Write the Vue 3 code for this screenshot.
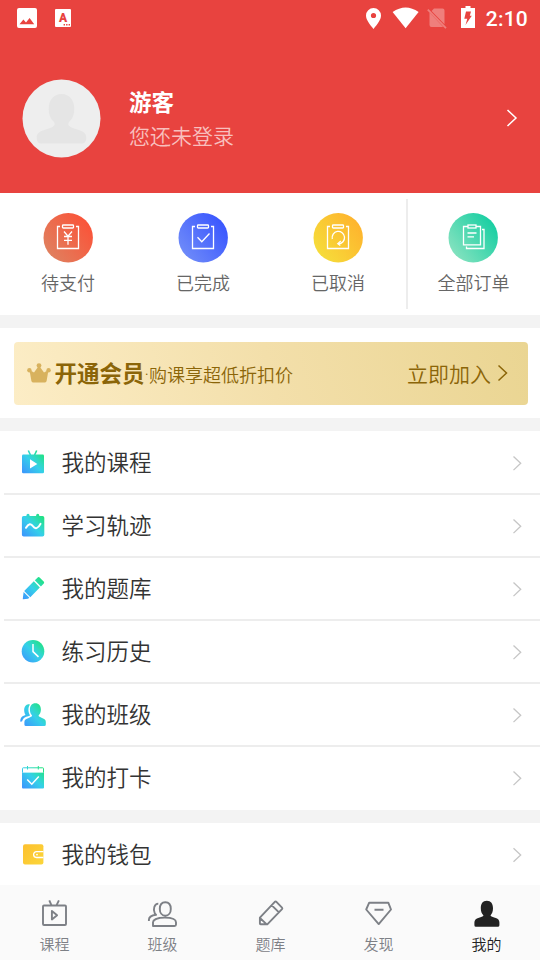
<script setup>
const orders = [
  { id: 'pay', label: '待支付', from: '#dd8563', to: '#fd4f35' },
  { id: 'done', label: '已完成', from: '#7490f8', to: '#3552ff' },
  { id: 'cancel', label: '已取消', from: '#f5e13c', to: '#ffb02c' },
  { id: 'all', label: '全部订单', from: '#90e4c2', to: '#0fcda0' },
]
const rows = [
  { id: 'course', label: '我的课程' },
  { id: 'track', label: '学习轨迹' },
  { id: 'bank', label: '我的题库' },
  { id: 'history', label: '练习历史' },
  { id: 'class', label: '我的班级' },
  { id: 'checkin', label: '我的打卡' },
]
const tabs = [
  { id: 'course', label: '课程' },
  { id: 'class', label: '班级' },
  { id: 'bank', label: '题库' },
  { id: 'find', label: '发现' },
  { id: 'me', label: '我的' },
]
</script>

<template>
  <div class="screen">
    <svg class="defs" width="0" height="0">
      <defs>
        <linearGradient id="aqua" gradientUnits="userSpaceOnUse" x1="3" y1="23" x2="23" y2="3">
          <stop offset="0" stop-color="#3c96fc" />
          <stop offset=".5" stop-color="#35cfea" />
          <stop offset=".68" stop-color="#2fd9c4" />
          <stop offset="1" stop-color="#1ee27c" />
        </linearGradient>
        <linearGradient id="gold" x1="0" y1="0" x2="1" y2="1">
          <stop offset="0" stop-color="#fdc02f" />
          <stop offset="1" stop-color="#fbd63a" />
        </linearGradient>
      </defs>
    </svg>

    <header class="header">
      <div class="status">
        <svg class="s-img" width="20" height="20" viewBox="0 0 20 20">
          <path fill="#fff" fill-rule="evenodd" d="M2 0H18Q20 0 20 2V18Q20 20 18 20H2Q0 20 0 18V2Q0 0 2 0ZM2.500 16.200H17.200L12.600 10L9 14.600L6.400 11.600Z" />
        </svg>
        <svg class="s-a" width="16" height="18" viewBox="0 0 16 18">
          <rect width="16" height="18" rx="1" fill="#fff" />
          <text x="8" y="13" text-anchor="middle" class="s-letter">A</text>
          <path d="M8.600 15.800H10M11.100 15.800H12.500M13.600 15.800H15" stroke="#e8433f" stroke-width="1.400" />
        </svg>
        <span class="grow"></span>
        <svg class="s-pin" width="16" height="21" viewBox="0 0 16 21">
          <path fill="#fff" fill-rule="evenodd" d="M7.500 0A7.500 7.500 0 0 1 15 7.500C15 12 11 16.500 7.500 21C4 16.500 0 12 0 7.500A7.500 7.500 0 0 1 7.500 0ZM7.500 4.900A2.600 2.600 0 1 0 7.500 10.100A2.600 2.600 0 1 0 7.500 4.900Z" />
        </svg>
        <svg class="s-wifi" width="26" height="21" viewBox="0 0 26 21">
          <path fill="#fff" d="M12.600 20.300L-.4 4.100Q12.600-4.900 25.600 4.100Z" />
        </svg>
        <svg class="s-sim" width="20" height="22" viewBox="0 0 20 22">
          <path fill="#ef7f7c" d="M7 1.500H15.500Q17.500 1.500 17.500 3.500V17.200L4.600 4ZM2.500 5.600L16 19.800Q15.700 20 15 20H4.500Q2.500 20 2.500 18Z" />
          <path d="M.8 2.600L19 21.200" stroke="#ef7f7c" stroke-width="1.800" />
        </svg>
        <svg class="s-bat" width="14" height="22" viewBox="0 0 14 22">
          <path fill="#fff" d="M4.500 0H9.500V2H14V22H0V2H4.500Z" />
          <path fill="#e8433f" d="M5 5.600H10L8.800 9.800H10.800L4.500 19L6.300 12.800H3.300Z" />
        </svg>
        <span class="clock">2:10</span>
      </div>
      <div class="profile">
        <svg class="avatar" width="79" height="79" viewBox="0 0 79 79">
          <g transform="translate(.5 .5)">
            <circle cx="39" cy="39" r="39" fill="#eee" />
            <path fill="#e5e5e5" d="M39 14.500C47 14.500 51.800 21 51.800 29.500C51.800 35 50 39.500 46.500 42.500C44.500 46 47 47.500 53 49.500C60 51.500 63.800 53 63.800 58.500Q63.800 64 59 64H19Q14.200 64 14.200 58.500C14.200 53 18 51.500 25 49.500C31 47.500 33.500 46 31.500 42.500C28 39.500 26.200 35 26.200 29.500C26.200 21 31 14.500 39 14.500Z" />
          </g>
        </svg>
        <div class="who">
          <div class="name">游客</div>
          <div class="hint">您还未登录</div>
        </div>
        <svg class="go" width="12" height="18" viewBox="0 0 12 18"><path d="M1.500 1L10 9L1.500 17" fill="none" stroke="#fff" stroke-width="1.500" /></svg>
      </div>
    </header>

    <nav class="orders">
      <div v-for="o in orders" :key="o.id" class="order" :class="o.id">
        <svg width="50" height="50" viewBox="0 0 50 50">
          <defs>
            <linearGradient :id="'g-' + o.id" x1="0" y1=".9" x2="1" y2=".15">
              <stop offset="0" :stop-color="o.from" />
              <stop offset="1" :stop-color="o.to" />
            </linearGradient>
          </defs>
          <circle cx="25.200" cy="24.700" r="24.700" :fill="`url(#g-${o.id})`" />
          <g fill="none" stroke="#fff" stroke-width="1.300">
            <template v-if="o.id !== 'all'">
              <path d="M17 13.500H14.500V35.500H35.500V13.500H33" />
              <rect x="19.500" y="12" width="11" height="3" rx=".8" />
            </template>
            <path v-if="o.id === 'pay'" d="M21 18.500L25 23.200L29 18.500M25 23.200V31.700M21 23.500H29M21 27.300H29" />
            <path v-if="o.id === 'done'" d="M19.500 24.200L23.800 28.700L31.500 20.500" />
            <template v-if="o.id === 'cancel'">
              <path d="M19.300 26A6.200 6.200 0 1 1 25.500 30.800" />
              <path d="M27.800 28L24.800 30.600L27.300 32.500" />
            </template>
            <template v-if="o.id === 'all'">
              <path d="M20 13.500H15.500V31.800H32.500V13.500H28" />
              <rect x="20" y="12" width="8" height="3" />
              <path d="M19.500 20H28.500M19.500 23.800H26M34 16.500H36V35.500H18.500V33.500" />
            </template>
          </g>
        </svg>
        <span>{{ o.label }}</span>
      </div>
    </nav>

    <section class="promo">
      <div class="vip">
        <svg width="24" height="20" viewBox="0 0 24 20">
          <path fill="#d8b25e" d="M2.500 7L7 9.500L11 4H13L17 9.500L21.500 7L19.600 18Q19.300 19.400 18 19.400H6Q4.700 19.400 4.400 18Z" />
          <g fill="#d8b25e"><circle cx="12" cy="2.600" r="2.400" /><circle cx="2.400" cy="7.200" r="2.200" /><circle cx="21.600" cy="7.200" r="2.200" /></g>
        </svg>
        <b>开通会员</b><span class="desc"><i>·</i>购课享超低折扣价</span>
        <span class="join">立即加入</span>
        <svg width="11" height="18" viewBox="0 0 11 18"><path d="M1.500 1.500L9.500 9L1.500 16.500" fill="none" stroke="#8b6508" stroke-width="1.500" /></svg>
      </div>
    </section>

    <main class="list">
      <div v-for="r in rows" :key="r.id" class="row">
        <svg class="ico" width="26" height="26" viewBox="0 0 26 26" fill="url(#aqua)">
          <template v-if="r.id === 'course'">
            <rect x="2" y="4.500" width="22" height="18.700" rx="1.200" />
            <path d="M8.300 .5L10.500 5.200M16.700 .5L14.500 5.200" stroke="url(#aqua)" stroke-width="1.600" />
            <path d="M10 9.200L17.300 13.900L10 18.600Z" fill="#fff" />
          </template>
          <template v-else-if="r.id === 'track'">
            <path d="M3.500 3H6.300Q6.500 .8 8 .8T9.700 3H16Q16.200 .8 17.700 .8T19.400 3H22.500Q24.300 3 24.300 4.800V21.800Q24.300 23.600 22.500 23.600H3.700Q1.900 23.600 1.900 21.800V4.800Q1.900 3 3.500 3Z" />
            <path d="M6 14.800C8.500 10.500 11 10.200 13 13.300C15 16.300 18 16 20.500 10.900" fill="none" stroke="#fff" stroke-width="2" stroke-linecap="round" />
          </template>
          <template v-else-if="r.id === 'bank'">
            <path d="M14.800 4.300L18 1.300Q18.800 .8 19.600 1.500L23.900 5.800Q24.500 6.600 23.800 7.400L20.900 10.400ZM13.800 5.300L19.800 11.500L10.300 21.200L4.200 15ZM3.600 15.900L9.400 21.800L8 22.800L3.200 23.300Q2.700 23.300 2.800 22.700Z" />
          </template>
          <template v-else-if="r.id === 'history'">
            <circle cx="13" cy="12.300" r="11.300" />
            <path d="M13 4.900V12.600L18.500 17.900" fill="none" stroke="#fff" stroke-width="1.500" />
          </template>
          <template v-else-if="r.id === 'class'">
            <path d="M15.400 1.300C19 1.300 20.900 4 20.900 7.500C20.900 10 20 12.200 18.600 13.300C18.500 14.800 20 15.200 22 15.900C24.500 16.700 25.800 17.700 25.800 20V22.500Q25.800 24 24.300 24H6Q4.400 24 4.400 22.500V20C4.400 17.700 6 16.700 8.700 15.900C10.700 15.200 12.200 14.800 12 13.300C10.700 12.200 9.900 10 9.900 7.500C9.900 4 11.800 1.300 15.400 1.300Z" />
            <path d="M10 2.500C7.700 5.500 8.100 10.500 10.200 13.400C8 14.300 4.300 14.800 3 17.300C2 19 2.600 19.800 .4 19.800C0 15.500 2 14.200 5.500 12.900C3.300 9 3.600 3 8.300 2.200Q9.300 2 10 2.500Z" />
          </template>
          <template v-else>
            <path d="M2 7.200H24V22.500Q24 23.500 23 23.500H3Q2 23.500 2 22.500Z" />
            <path d="M2.500 7.500V3.500Q2.500 2.800 3.200 2.800H22.800Q23.500 2.800 23.500 3.500V7.500M7.500 1V4.500M18.300 1V4.500" fill="#fff" stroke="url(#aqua)" stroke-width="1" />
            <path d="M7.200 14.500L11.800 19.200L18.800 11.500" fill="none" stroke="#fff" stroke-width="1.500" />
          </template>
        </svg>
        <span>{{ r.label }}</span>
        <svg width="10" height="16" viewBox="0 0 10 16"><path d="M1.500 1.500L8.700 8.300L1.500 15.100" fill="none" stroke="#c6c6c6" stroke-width="1.300" /></svg>
      </div>
    </main>

    <section class="wallet">
      <div class="row">
        <svg class="ico" width="26" height="26" viewBox="0 0 26 26">
          <rect x="3" y="2.200" width="20.400" height="20.400" rx="2" fill="url(#gold)" />
          <path d="M23.400 9.700H16.500A2.900 2.900 0 0 0 16.500 15.500H23.400" fill="none" stroke="#fff" stroke-width="1.300" />
          <circle cx="17" cy="12.600" r=".9" fill="#fff" />
        </svg>
        <span>我的钱包</span>
        <svg width="10" height="16" viewBox="0 0 10 16"><path d="M1.500 1.200L8.700 8L1.500 14.800" fill="none" stroke="#c6c6c6" stroke-width="1.300" /></svg>
      </div>
    </section>

    <footer class="tabs">
      <div v-for="t in tabs" :key="t.id" class="tab" :class="{ active: t.id === 'me' }">
        <svg width="30" height="30" viewBox="0 0 30 30" fill="none" stroke="#7d8086" stroke-width="1.900" stroke-linejoin="round">
          <template v-if="t.id === 'course'">
            <rect x="3" y="6.500" width="23" height="19.500" rx="1" />
            <path d="M9.300 1.400L11.400 6.200M18.900 1.400L16.600 6.200M11.900 12L17.100 16.200L11.900 20.400Z" />
          </template>
          <template v-else-if="t.id === 'class'">
            <path d="M17.300 3.200C20.800 3.200 22.800 6 22.800 10C22.800 13.800 20.700 16.700 17.300 16.700S11.800 13.800 11.800 10C11.800 6 13.800 3.200 17.300 3.200ZM5 27V23.300C5 20.300 10.300 18.600 16.800 18.600S28 20.300 28 23.300V25.500Q28 27 26.500 27Z" />
            <path d="M10.300 4.600C6.300 4.600 4.800 10.300 6.800 14.300L8.100 15.800C3.300 16.500 .9 17.800 .9 20.800V22.100" />
          </template>
          <template v-else-if="t.id === 'bank'">
            <path d="M3.900 18.600L18.800 2.800Q19.600 2.100 20.400 2.800L26 8.600Q26.700 9.400 26 10.200L11.300 25.300H4.600Q3.900 25.300 3.900 24.600ZM15.800 6.300L22.700 13.200M4.200 19.300L10.500 25.100" />
          </template>
          <path v-else-if="t.id === 'find'" d="M5.200 3.700H24.300L27 10.500L14.700 25.100L2.200 10.500ZM10.500 10.700H19.500" />
          <path v-else fill="#222" stroke="none" d="M14.800 1.800C19 1.800 21 4.800 21 9.300C21 12.200 20 15 18.500 16.500C19 17.600 21 18 23 18.700C26.200 19.700 27.400 21 27.400 23.500V26.300Q27.400 27.800 25.800 27.800H4Q2.400 27.800 2.400 26.300V23.500C2.400 21 3.800 19.700 7 18.700C9 18 11 17.600 11.500 16.500C9.800 15 8.800 12.200 8.800 9.300C8.800 4.800 10.600 1.800 14.800 1.800Z" />
        </svg>
        <span>{{ t.label }}</span>
      </div>
    </footer>
  </div>
</template>

<style>
body {
  margin: 0;
  background: #f3f3f3;
}
</style>

<style scoped>
.screen {
  width: 540px;
  height: 960px;
  display: flex;
  flex-direction: column;
  overflow: hidden;
  background: #f3f3f3;
  font-family: "Noto Sans CJK SC", sans-serif;
  font-weight: 350;
  color: #333;
}
svg {
  display: block;
  flex: none;
  overflow: visible;
}
.defs {
  position: absolute;
}
.grow {
  flex: 1;
}
.header {
  height: 193px;
  background: #e8433f;
}
.status {
  display: flex;
  height: 36px;
  align-items: center;
  padding: 0 12px 0 17px;
}
.s-letter {
  font: 900 12px Roboto, sans-serif;
  fill: #e8433f;
}
.s-a { margin-left: 18px; }
.s-wifi { margin-left: 11px; }
.s-sim { margin-left: 8.5px; }
.s-bat { margin-left: 13.5px; margin-bottom: 2px; }
.clock {
  margin-left: 11px;
  padding-top: 2px;
  font: 500 21px/24px Roboto, sans-serif;
  letter-spacing: 0.2px;
  color: #fff;
}
.profile {
  display: flex;
  align-items: center;
  height: 79px;
  padding: 43px 22px 0;
}
.who {
  flex: 1;
  margin-left: 28px;
  margin-top: -2px;
}
.go {
  margin-top: -2px;
}
.name {
  font-size: 22.5px;
  line-height: 34px;
  font-weight: 700;
  color: #fff;
}
.hint {
  font-size: 21px;
  line-height: 34px;
  color: #f8bfbd;
}
.orders {
  height: 122px;
  display: grid;
  grid-template-columns: repeat(4, 1fr);
  background: #fff;
}
.order {
  display: flex;
  flex-direction: column;
  align-items: center;
  padding-top: 20px;
  padding-left: 1px;
  font-size: 18px;
  line-height: 26px;
  color: #666;
}
.order span {
  margin-top: 6px;
}
.order.all {
  height: 91px;
  margin-top: 6px;
  padding-top: 14px;
  padding-bottom: 5px;
  margin-left: 1px;
  border-left: 2px solid #ededed;
  padding-right: 2px;
}
.order.all svg {
  margin-right: 1px;
}
.promo {
  margin-top: 13px;
  height: 63px;
  padding: 13.5px 12px 13.5px 13.5px;
  background: #fff;
}
.vip {
  height: 63px;
  box-sizing: border-box;
  display: flex;
  align-items: center;
  padding: 0 20px 0 13px;
  border-radius: 4px;
  background: linear-gradient(75deg, #fcedc6, #f3dfaa 50%, #ead592);
  color: #8b6508;
}
.vip b {
  margin-left: 4px;
  margin-top: -2px;
  font-size: 22.5px;
  font-weight: 700;
}
.desc {
  display: flex;
  font-size: 18px;
  padding-top: 3px;
}
.desc i {
  width: 4.5px;
  font-family: Roboto, sans-serif;
  font-style: normal;
  line-height: 27px;
}
.join {
  margin-left: auto;
  margin-right: 6px;
  font-size: 21px;
}
.list {
  margin-top: 13px;
  padding-top: 1px;
  background: #fff;
}
.row {
  box-sizing: border-box;
  height: 63px;
  margin-left: 4px;
  padding: 0 18px 0 16px;
  display: flex;
  align-items: center;
  border-bottom: 2px solid #ededed;
  font-size: 22.5px;
  line-height: 32px;
}
.row:last-child {
  border-bottom-color: #fff;
}
.row span {
  flex: 1;
  margin-left: 15.5px;
  margin-top: -4px;
}
.wallet {
  margin-top: 13px;
  height: 62px;
  background: #fff;
}
.wallet .row {
  height: 62px;
  border: 0;
  padding-top: 1px;
}
.wallet .row span {
  margin-top: -3px;
}
.tabs {
  flex: 1;
  display: grid;
  grid-template-columns: repeat(5, 1fr);
  background: #fafafa;
}
.tab {
  display: flex;
  flex-direction: column;
  align-items: center;
  padding-top: 14px;
  padding-left: 1px;
  font-size: 15px;
  line-height: 22px;
  color: #7d8086;
}
.tab span {
  margin-top: 4px;
}
.tab.active {
  color: #222;
}
</style>
